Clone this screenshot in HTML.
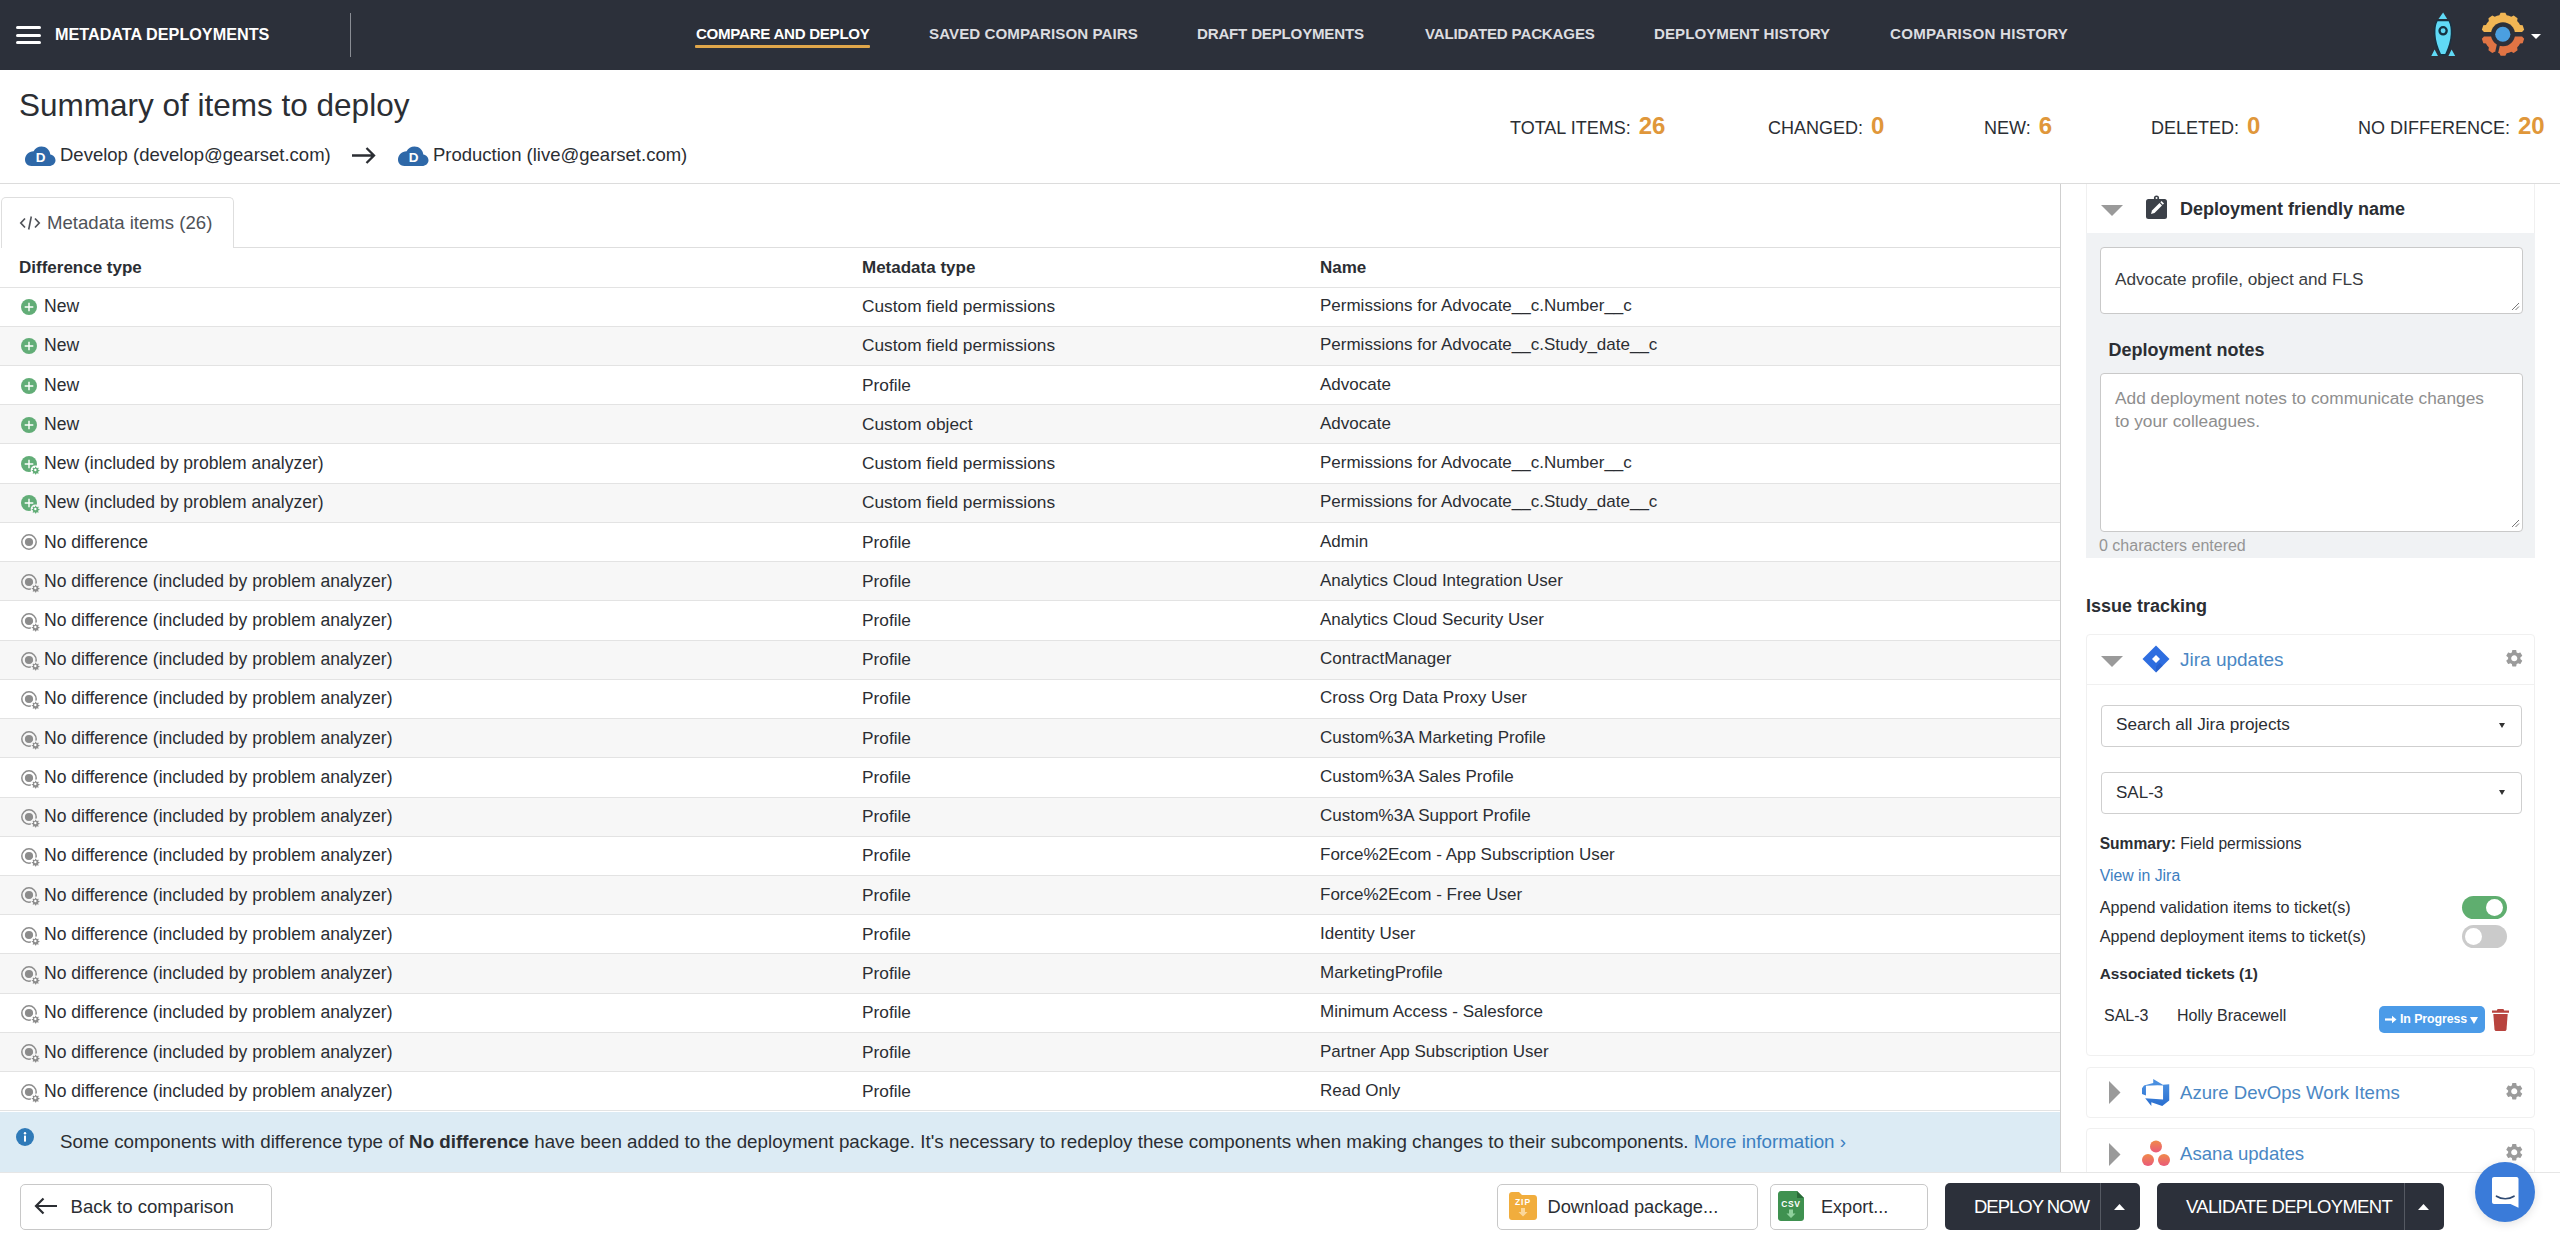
<!DOCTYPE html>
<html><head><meta charset="utf-8">
<style>
*{box-sizing:border-box;margin:0;padding:0}
html,body{width:2560px;height:1234px;overflow:hidden;background:#fff;font-family:"Liberation Sans",sans-serif;color:#2b2e33}
.abs{position:absolute}
.nw{white-space:nowrap}
/* nav */
#nav{position:absolute;left:0;top:0;width:2560px;height:70px;background:#2c303a}
.hb{position:absolute;left:16px;width:25px;height:3px;border-radius:2px;background:#fff}
.navi{position:absolute;top:25px;font-size:15.1px;font-weight:700;color:#dcdde0;white-space:nowrap;line-height:18px}
/* header */
.stat{position:absolute;top:114.5px;font-size:18px;color:#2b2e33;white-space:nowrap;line-height:22px}
.stat b{color:#e0973a;font-size:24px;margin-left:8px;position:relative;top:0.5px}
/* table */
.row{position:absolute;left:0;width:2060px;height:39.23px;border-top:1px solid #e3e3e3}
.row.alt{background:#f7f7f7}
.cell{position:absolute;top:-0.4px;line-height:38px;font-size:17.3px;white-space:nowrap;color:#2b2e33}
.ic{position:absolute;left:21px;top:11.5px;width:16px;height:16px}
</style></head><body>

<div id="nav">
  <div class="hb" style="top:26px"></div>
  <div class="hb" style="top:34px"></div>
  <div class="hb" style="top:41px"></div>
  <div class="abs nw" style="left:55px;top:24px;font-size:16.2px;font-weight:700;color:#fff;line-height:20px">METADATA DEPLOYMENTS</div>
  <div class="abs" style="left:350px;top:13px;width:1px;height:44px;background:#8a8d94"></div>
  <div class="navi" style="left:696px;color:#fff;letter-spacing:-.28px">COMPARE AND DEPLOY</div>
  <div class="abs" style="left:695px;top:45px;width:175px;height:3px;background:#e0a64a;border-radius:1px"></div>
  <div class="navi" style="left:929px;letter-spacing:.08px">SAVED COMPARISON PAIRS</div>
  <div class="navi" style="left:1197px;letter-spacing:-.2px">DRAFT DEPLOYMENTS</div>
  <div class="navi" style="left:1425px;letter-spacing:-.17px">VALIDATED PACKAGES</div>
  <div class="navi" style="left:1654px;letter-spacing:.05px">DEPLOYMENT HISTORY</div>
  <div class="navi" style="left:1890px;letter-spacing:.27px">COMPARISON HISTORY</div>
  <svg class="abs" style="left:2431px;top:12px" width="25" height="45" viewBox="0 0 25 45"><path d="M7.5 6.9L12.1 0.6 16.2 6.9z" fill="#60daf6"/><path d="M0.3 43.9L3.6 37.4 7 43.9zM17.4 43.9L20.6 37.4 24.2 43.9z" fill="#60daf6"/><path d="M6 8.6H18.2C20 12 20.7 17 20.5 22 20.2 30 17.2 37.5 14.7 42.8H9.5C7 37.5 4 30 3.7 22 3.5 17 4.2 12 6 8.6z" fill="#60daf6" stroke="#163242" stroke-width="1.5"/><circle cx="12.1" cy="18.8" r="3.6" fill="none" stroke="#163242" stroke-width="2.3"/></svg>
  <svg class="abs" style="left:2481px;top:12px" width="44" height="45" viewBox="0 0 44 45"><defs><clipPath id="gtop"><rect x="0" y="0" width="44" height="20.1"/></clipPath><clipPath id="gbot"><rect x="0" y="24.5" width="44" height="21"/></clipPath></defs><path clip-path="url(#gtop)" fill="#f2b654" d="M18.34 3.20 L19.63 0.78 L24.37 0.78 L25.66 3.20 L26.84 3.46 L27.99 3.80 L29.13 4.21 L30.23 4.68 L32.70 3.49 L36.54 6.27 L36.16 8.99 L36.96 9.90 L37.69 10.85 L38.37 11.84 L38.99 12.88 L41.69 13.36 L43.15 17.87 L41.25 19.85 L41.36 21.05 L41.40 22.25 L41.36 23.45 L41.25 24.65 L43.15 26.63 L41.69 31.14 L38.99 31.62 L38.37 32.66 L37.69 33.65 L36.96 34.60 L36.16 35.51 L36.54 38.23 L32.70 41.01 L30.23 39.82 L29.13 40.29 L27.99 40.70 L26.84 41.04 L25.66 41.30 L24.37 43.72 L19.63 43.72 L18.34 41.30 L17.16 41.04 L16.01 40.70 L14.87 40.29 L13.77 39.82 L11.30 41.01 L7.46 38.23 L7.84 35.51 L7.04 34.60 L6.31 33.65 L5.63 32.66 L5.01 31.62 L2.31 31.14 L0.85 26.63 L2.75 24.65 L2.64 23.45 L2.60 22.25 L2.64 21.05 L2.75 19.85 L0.85 17.87 L2.31 13.36 L5.01 12.88 L5.63 11.84 L6.31 10.85 L7.04 9.90 L7.84 8.99 L7.46 6.27 L11.30 3.49 L13.77 4.68 L14.87 4.21 L16.01 3.80 L17.16 3.46Z"/><path clip-path="url(#gbot)" fill="#e07444" d="M18.34 3.20 L19.63 0.78 L24.37 0.78 L25.66 3.20 L26.84 3.46 L27.99 3.80 L29.13 4.21 L30.23 4.68 L32.70 3.49 L36.54 6.27 L36.16 8.99 L36.96 9.90 L37.69 10.85 L38.37 11.84 L38.99 12.88 L41.69 13.36 L43.15 17.87 L41.25 19.85 L41.36 21.05 L41.40 22.25 L41.36 23.45 L41.25 24.65 L43.15 26.63 L41.69 31.14 L38.99 31.62 L38.37 32.66 L37.69 33.65 L36.96 34.60 L36.16 35.51 L36.54 38.23 L32.70 41.01 L30.23 39.82 L29.13 40.29 L27.99 40.70 L26.84 41.04 L25.66 41.30 L24.37 43.72 L19.63 43.72 L18.34 41.30 L17.16 41.04 L16.01 40.70 L14.87 40.29 L13.77 39.82 L11.30 41.01 L7.46 38.23 L7.84 35.51 L7.04 34.60 L6.31 33.65 L5.63 32.66 L5.01 31.62 L2.31 31.14 L0.85 26.63 L2.75 24.65 L2.64 23.45 L2.60 22.25 L2.64 21.05 L2.75 19.85 L0.85 17.87 L2.31 13.36 L5.01 12.88 L5.63 11.84 L6.31 10.85 L7.04 9.90 L7.84 8.99 L7.46 6.27 L11.30 3.49 L13.77 4.68 L14.87 4.21 L16.01 3.80 L17.16 3.46Z"/><circle cx="22" cy="22.25" r="12" fill="#2c303a"/><path d="M17.7 31.5L14.6 45" stroke="#2c303a" stroke-width="3.2"/><circle cx="21.8" cy="22.25" r="7.6" fill="#4b9fe0"/></svg>
  <svg class="abs" style="left:2531px;top:34px" width="10" height="5" viewBox="0 0 10 5"><path d="M0 0h10L5 5z" fill="#fff"/></svg>
</div>

<!-- header -->
<div class="abs nw" style="left:19px;top:86px;font-size:31.5px;line-height:38px;color:#2b2e33">Summary of items to deploy</div>
<div class="abs nw" style="left:60px;top:144px;font-size:18.5px;line-height:22px;color:#2b2e33">Develop (develop@gearset.com)</div>
<div class="abs nw" style="left:433px;top:144px;font-size:18.5px;line-height:22px;color:#2b2e33">Production (live@gearset.com)</div>
<svg class="abs" style="left:25px;top:145px" width="31" height="21" viewBox="0 0 31 21"><path transform="translate(30.5 0) scale(-1 1)" d="M6.5 21C2.9 21 0 18.5 0 15.2c0-2.9 2.2-5.3 5.2-5.8C5.6 4.9 9.4 1.5 14 1.5c3.4 0 6.4 1.9 7.9 4.8 4.9.1 8.6 3.9 8.6 8.5 0 3.5-2.8 6.2-6.3 6.2z" fill="#2e68a8"/><text x="15.5" y="16.8" font-family="Liberation Sans" font-weight="700" font-size="13.5" fill="#fff" text-anchor="middle">D</text></svg>
<svg class="abs" style="left:352px;top:147px" width="24" height="17" viewBox="0 0 24 17"><path d="M0 8.5h22M14.5 1l7.5 7.5-7.5 7.5" fill="none" stroke="#2b2e33" stroke-width="2.3"/></svg>
<svg class="abs" style="left:398px;top:145px" width="31" height="21" viewBox="0 0 31 21"><path transform="translate(30.5 0) scale(-1 1)" d="M6.5 21C2.9 21 0 18.5 0 15.2c0-2.9 2.2-5.3 5.2-5.8C5.6 4.9 9.4 1.5 14 1.5c3.4 0 6.4 1.9 7.9 4.8 4.9.1 8.6 3.9 8.6 8.5 0 3.5-2.8 6.2-6.3 6.2z" fill="#2e68a8"/><text x="15.5" y="16.8" font-family="Liberation Sans" font-weight="700" font-size="13.5" fill="#fff" text-anchor="middle">D</text></svg>
<div class="stat" style="left:1510px">TOTAL ITEMS:<b>26</b></div>
<div class="stat" style="left:1768px">CHANGED:<b>0</b></div>
<div class="stat" style="left:1984px">NEW:<b>6</b></div>
<div class="stat" style="left:2151px">DELETED:<b>0</b></div>
<div class="stat" style="left:2358px">NO DIFFERENCE:<b>20</b></div>
<div class="abs" style="left:0;top:183px;width:2560px;height:1px;background:#dcdcdc"></div>

<!-- main -->
<svg width="0" height="0" style="position:absolute">
 <defs>
  <g id="gearG" transform="translate(14.3 14) scale(.85) translate(-14.5 -14.5)"><path fill="#62ad77" d="M14.5 10.6l.9 0 .3 1.3 1 .5 1.1-.7.7.7-.7 1.1.4 1 1.3.3v1l-1.3.3-.4 1 .7 1.1-.7.7-1.1-.7-1 .4-.3 1.3h-1l-.3-1.3-1-.4-1.1.7-.7-.7.7-1.1-.4-1-1.3-.3v-1l1.3-.3.4-1-.7-1.1.7-.7 1.1.7 1-.5.3-1.3z"/><circle cx="14.5" cy="14.5" r="1.4" fill="#fff"/></g>
  <g id="gearN" transform="translate(14.3 14) scale(.85) translate(-14.5 -14.5)"><path fill="#8c8c8c" d="M14.5 10.6l.9 0 .3 1.3 1 .5 1.1-.7.7.7-.7 1.1.4 1 1.3.3v1l-1.3.3-.4 1 .7 1.1-.7.7-1.1-.7-1 .4-.3 1.3h-1l-.3-1.3-1-.4-1.1.7-.7-.7.7-1.1-.4-1-1.3-.3v-1l1.3-.3.4-1-.7-1.1.7-.7 1.1.7 1-.5.3-1.3z"/><circle cx="14.5" cy="14.5" r="1.4" fill="#fff"/></g>
  <g id="cog"><path fill="#9b9b9b" d="M19.14 12.94c.04-.3.06-.61.06-.94 0-.32-.02-.64-.07-.94l2.03-1.58c.18-.14.23-.41.12-.61l-1.92-3.32c-.12-.22-.37-.29-.59-.22l-2.39.96c-.5-.38-1.03-.7-1.62-.94l-.36-2.54c-.04-.24-.24-.41-.48-.41h-3.84c-.24 0-.43.17-.47.41l-.36 2.54c-.59.24-1.13.57-1.62.94l-2.39-.96c-.22-.08-.47 0-.59.22L2.74 8.87c-.12.21-.08.47.12.61l2.03 1.58c-.05.3-.09.63-.09.94s.02.64.07.94l-2.03 1.58c-.18.14-.23.41-.12.61l1.92 3.32c.12.22.37.29.59.22l2.39-.96c.5.38 1.03.7 1.62.94l.36 2.54c.05.24.24.41.48.41h3.84c.24 0 .44-.17.47-.41l.36-2.54c.59-.24 1.13-.56 1.62-.94l2.39.96c.22.08.47 0 .59-.22l1.92-3.32c.12-.22.07-.47-.12-.61l-2.01-1.58zM12 15.6c-1.98 0-3.6-1.62-3.6-3.6s1.62-3.6 3.6-3.6 3.6 1.62 3.6 3.6-1.62 3.6-3.6 3.6z"/></g>
 </defs>
</svg>
<div class="abs" style="left:0.5px;top:197px;width:233.5px;height:51px;border:1px solid #dedede;border-bottom:none;border-radius:5px 5px 0 0;background:#fff"></div>
<div class="abs" style="left:233px;top:247px;width:1827px;height:1px;background:#dedede"></div>
<div class="abs nw" style="left:19px;top:211.5px;font-size:18.6px;line-height:22px;color:#4f5258">
 <svg width="22" height="16" viewBox="0 0 22 16" style="vertical-align:-2px;margin-right:6px"><path d="M6 3.5L1.8 8 6 12.5M16 3.5L20.2 8 16 12.5" fill="none" stroke="#4f5258" stroke-width="1.7"/><path d="M12.3 1.5L9.7 14.5" stroke="#4f5258" stroke-width="1.6"/></svg>Metadata items (26)</div>
<div class="abs nw" style="left:19px;top:258px;font-size:17px;line-height:20px;font-weight:700;color:#2b2e33">Difference type</div>
<div class="abs nw" style="left:862px;top:258px;font-size:17px;line-height:20px;font-weight:700;color:#2b2e33">Metadata type</div>
<div class="abs nw" style="left:1320px;top:258px;font-size:17px;line-height:20px;font-weight:700;color:#2b2e33">Name</div>
<!--ROWS-->
<div class="row" style="top:286.5px"><svg class="ic" viewBox="0 0 16 16"><circle cx="8" cy="8" r="8" fill="#62ad77"/><path d="M8 3.7v8.6M3.7 8h8.6" stroke="#fff" stroke-width="1.4"/></svg><div class="cell" style="left:44px;font-size:17.55px">New</div><div class="cell" style="left:862px">Custom field permissions</div><div class="cell" style="left:1320px;font-size:17px">Permissions for Advocate__c.Number__c</div></div>
<div class="row alt" style="top:325.7px"><svg class="ic" viewBox="0 0 16 16"><circle cx="8" cy="8" r="8" fill="#62ad77"/><path d="M8 3.7v8.6M3.7 8h8.6" stroke="#fff" stroke-width="1.4"/></svg><div class="cell" style="left:44px;font-size:17.55px">New</div><div class="cell" style="left:862px">Custom field permissions</div><div class="cell" style="left:1320px;font-size:17px">Permissions for Advocate__c.Study_date__c</div></div>
<div class="row" style="top:365.0px"><svg class="ic" viewBox="0 0 16 16"><circle cx="8" cy="8" r="8" fill="#62ad77"/><path d="M8 3.7v8.6M3.7 8h8.6" stroke="#fff" stroke-width="1.4"/></svg><div class="cell" style="left:44px;font-size:17.55px">New</div><div class="cell" style="left:862px">Profile</div><div class="cell" style="left:1320px;font-size:17px">Advocate</div></div>
<div class="row alt" style="top:404.2px"><svg class="ic" viewBox="0 0 16 16"><circle cx="8" cy="8" r="8" fill="#62ad77"/><path d="M8 3.7v8.6M3.7 8h8.6" stroke="#fff" stroke-width="1.4"/></svg><div class="cell" style="left:44px;font-size:17.55px">New</div><div class="cell" style="left:862px">Custom object</div><div class="cell" style="left:1320px;font-size:17px">Advocate</div></div>
<div class="row" style="top:443.4px"><svg class="ic" viewBox="0 0 20 20" style="width:20px;height:20px"><circle cx="8" cy="8" r="8" fill="#62ad77"/><path d="M8 3.7v8.6M3.7 8h8.6" stroke="#fff" stroke-width="1.4"/><circle cx="14.3" cy="14" r="4.6" fill="#fff"/><use href="#gearG"/></svg><div class="cell" style="left:44px;font-size:17.55px">New (included by problem analyzer)</div><div class="cell" style="left:862px">Custom field permissions</div><div class="cell" style="left:1320px;font-size:17px">Permissions for Advocate__c.Number__c</div></div>
<div class="row alt" style="top:482.6px"><svg class="ic" viewBox="0 0 20 20" style="width:20px;height:20px"><circle cx="8" cy="8" r="8" fill="#62ad77"/><path d="M8 3.7v8.6M3.7 8h8.6" stroke="#fff" stroke-width="1.4"/><circle cx="14.3" cy="14" r="4.6" fill="#f7f7f7"/><use href="#gearG"/></svg><div class="cell" style="left:44px;font-size:17.55px">New (included by problem analyzer)</div><div class="cell" style="left:862px">Custom field permissions</div><div class="cell" style="left:1320px;font-size:17px">Permissions for Advocate__c.Study_date__c</div></div>
<div class="row" style="top:521.9px"><svg class="ic" viewBox="0 0 16 16"><circle cx="8" cy="8" r="7.2" fill="none" stroke="#8c8c8c" stroke-width="1.5"/><circle cx="8" cy="8" r="4.1" fill="#8c8c8c"/></svg><div class="cell" style="left:44px;font-size:17.55px">No difference</div><div class="cell" style="left:862px">Profile</div><div class="cell" style="left:1320px;font-size:17px">Admin</div></div>
<div class="row alt" style="top:561.1px"><svg class="ic" viewBox="0 0 20 20" style="width:20px;height:20px"><circle cx="8" cy="8" r="7.2" fill="none" stroke="#8c8c8c" stroke-width="1.5"/><circle cx="8" cy="8" r="4.1" fill="#8c8c8c"/><circle cx="14.3" cy="14" r="4.6" fill="#f7f7f7"/><use href="#gearN"/></svg><div class="cell" style="left:44px;font-size:17.55px">No difference (included by problem analyzer)</div><div class="cell" style="left:862px">Profile</div><div class="cell" style="left:1320px;font-size:17px">Analytics Cloud Integration User</div></div>
<div class="row" style="top:600.3px"><svg class="ic" viewBox="0 0 20 20" style="width:20px;height:20px"><circle cx="8" cy="8" r="7.2" fill="none" stroke="#8c8c8c" stroke-width="1.5"/><circle cx="8" cy="8" r="4.1" fill="#8c8c8c"/><circle cx="14.3" cy="14" r="4.6" fill="#fff"/><use href="#gearN"/></svg><div class="cell" style="left:44px;font-size:17.55px">No difference (included by problem analyzer)</div><div class="cell" style="left:862px">Profile</div><div class="cell" style="left:1320px;font-size:17px">Analytics Cloud Security User</div></div>
<div class="row alt" style="top:639.6px"><svg class="ic" viewBox="0 0 20 20" style="width:20px;height:20px"><circle cx="8" cy="8" r="7.2" fill="none" stroke="#8c8c8c" stroke-width="1.5"/><circle cx="8" cy="8" r="4.1" fill="#8c8c8c"/><circle cx="14.3" cy="14" r="4.6" fill="#f7f7f7"/><use href="#gearN"/></svg><div class="cell" style="left:44px;font-size:17.55px">No difference (included by problem analyzer)</div><div class="cell" style="left:862px">Profile</div><div class="cell" style="left:1320px;font-size:17px">ContractManager</div></div>
<div class="row" style="top:678.8px"><svg class="ic" viewBox="0 0 20 20" style="width:20px;height:20px"><circle cx="8" cy="8" r="7.2" fill="none" stroke="#8c8c8c" stroke-width="1.5"/><circle cx="8" cy="8" r="4.1" fill="#8c8c8c"/><circle cx="14.3" cy="14" r="4.6" fill="#fff"/><use href="#gearN"/></svg><div class="cell" style="left:44px;font-size:17.55px">No difference (included by problem analyzer)</div><div class="cell" style="left:862px">Profile</div><div class="cell" style="left:1320px;font-size:17px">Cross Org Data Proxy User</div></div>
<div class="row alt" style="top:718.0px"><svg class="ic" viewBox="0 0 20 20" style="width:20px;height:20px"><circle cx="8" cy="8" r="7.2" fill="none" stroke="#8c8c8c" stroke-width="1.5"/><circle cx="8" cy="8" r="4.1" fill="#8c8c8c"/><circle cx="14.3" cy="14" r="4.6" fill="#f7f7f7"/><use href="#gearN"/></svg><div class="cell" style="left:44px;font-size:17.55px">No difference (included by problem analyzer)</div><div class="cell" style="left:862px">Profile</div><div class="cell" style="left:1320px;font-size:17px">Custom%3A Marketing Profile</div></div>
<div class="row" style="top:757.3px"><svg class="ic" viewBox="0 0 20 20" style="width:20px;height:20px"><circle cx="8" cy="8" r="7.2" fill="none" stroke="#8c8c8c" stroke-width="1.5"/><circle cx="8" cy="8" r="4.1" fill="#8c8c8c"/><circle cx="14.3" cy="14" r="4.6" fill="#fff"/><use href="#gearN"/></svg><div class="cell" style="left:44px;font-size:17.55px">No difference (included by problem analyzer)</div><div class="cell" style="left:862px">Profile</div><div class="cell" style="left:1320px;font-size:17px">Custom%3A Sales Profile</div></div>
<div class="row alt" style="top:796.5px"><svg class="ic" viewBox="0 0 20 20" style="width:20px;height:20px"><circle cx="8" cy="8" r="7.2" fill="none" stroke="#8c8c8c" stroke-width="1.5"/><circle cx="8" cy="8" r="4.1" fill="#8c8c8c"/><circle cx="14.3" cy="14" r="4.6" fill="#f7f7f7"/><use href="#gearN"/></svg><div class="cell" style="left:44px;font-size:17.55px">No difference (included by problem analyzer)</div><div class="cell" style="left:862px">Profile</div><div class="cell" style="left:1320px;font-size:17px">Custom%3A Support Profile</div></div>
<div class="row" style="top:835.7px"><svg class="ic" viewBox="0 0 20 20" style="width:20px;height:20px"><circle cx="8" cy="8" r="7.2" fill="none" stroke="#8c8c8c" stroke-width="1.5"/><circle cx="8" cy="8" r="4.1" fill="#8c8c8c"/><circle cx="14.3" cy="14" r="4.6" fill="#fff"/><use href="#gearN"/></svg><div class="cell" style="left:44px;font-size:17.55px">No difference (included by problem analyzer)</div><div class="cell" style="left:862px">Profile</div><div class="cell" style="left:1320px;font-size:17px">Force%2Ecom - App Subscription User</div></div>
<div class="row alt" style="top:874.9px"><svg class="ic" viewBox="0 0 20 20" style="width:20px;height:20px"><circle cx="8" cy="8" r="7.2" fill="none" stroke="#8c8c8c" stroke-width="1.5"/><circle cx="8" cy="8" r="4.1" fill="#8c8c8c"/><circle cx="14.3" cy="14" r="4.6" fill="#f7f7f7"/><use href="#gearN"/></svg><div class="cell" style="left:44px;font-size:17.55px">No difference (included by problem analyzer)</div><div class="cell" style="left:862px">Profile</div><div class="cell" style="left:1320px;font-size:17px">Force%2Ecom - Free User</div></div>
<div class="row" style="top:914.2px"><svg class="ic" viewBox="0 0 20 20" style="width:20px;height:20px"><circle cx="8" cy="8" r="7.2" fill="none" stroke="#8c8c8c" stroke-width="1.5"/><circle cx="8" cy="8" r="4.1" fill="#8c8c8c"/><circle cx="14.3" cy="14" r="4.6" fill="#fff"/><use href="#gearN"/></svg><div class="cell" style="left:44px;font-size:17.55px">No difference (included by problem analyzer)</div><div class="cell" style="left:862px">Profile</div><div class="cell" style="left:1320px;font-size:17px">Identity User</div></div>
<div class="row alt" style="top:953.4px"><svg class="ic" viewBox="0 0 20 20" style="width:20px;height:20px"><circle cx="8" cy="8" r="7.2" fill="none" stroke="#8c8c8c" stroke-width="1.5"/><circle cx="8" cy="8" r="4.1" fill="#8c8c8c"/><circle cx="14.3" cy="14" r="4.6" fill="#f7f7f7"/><use href="#gearN"/></svg><div class="cell" style="left:44px;font-size:17.55px">No difference (included by problem analyzer)</div><div class="cell" style="left:862px">Profile</div><div class="cell" style="left:1320px;font-size:17px">MarketingProfile</div></div>
<div class="row" style="top:992.6px"><svg class="ic" viewBox="0 0 20 20" style="width:20px;height:20px"><circle cx="8" cy="8" r="7.2" fill="none" stroke="#8c8c8c" stroke-width="1.5"/><circle cx="8" cy="8" r="4.1" fill="#8c8c8c"/><circle cx="14.3" cy="14" r="4.6" fill="#fff"/><use href="#gearN"/></svg><div class="cell" style="left:44px;font-size:17.55px">No difference (included by problem analyzer)</div><div class="cell" style="left:862px">Profile</div><div class="cell" style="left:1320px;font-size:17px">Minimum Access - Salesforce</div></div>
<div class="row alt" style="top:1031.9px"><svg class="ic" viewBox="0 0 20 20" style="width:20px;height:20px"><circle cx="8" cy="8" r="7.2" fill="none" stroke="#8c8c8c" stroke-width="1.5"/><circle cx="8" cy="8" r="4.1" fill="#8c8c8c"/><circle cx="14.3" cy="14" r="4.6" fill="#f7f7f7"/><use href="#gearN"/></svg><div class="cell" style="left:44px;font-size:17.55px">No difference (included by problem analyzer)</div><div class="cell" style="left:862px">Profile</div><div class="cell" style="left:1320px;font-size:17px">Partner App Subscription User</div></div>
<div class="row" style="top:1071.1px"><svg class="ic" viewBox="0 0 20 20" style="width:20px;height:20px"><circle cx="8" cy="8" r="7.2" fill="none" stroke="#8c8c8c" stroke-width="1.5"/><circle cx="8" cy="8" r="4.1" fill="#8c8c8c"/><circle cx="14.3" cy="14" r="4.6" fill="#fff"/><use href="#gearN"/></svg><div class="cell" style="left:44px;font-size:17.55px">No difference (included by problem analyzer)</div><div class="cell" style="left:862px">Profile</div><div class="cell" style="left:1320px;font-size:17px">Read Only</div></div>
<!--/ROWS-->
<div class="abs" style="left:0;top:1110.3px;width:2060px;height:1px;background:#e3e3e3"></div>
<div class="abs" style="left:2060px;top:184px;width:1px;height:988px;background:#cfcfcf"></div>

<!-- banner -->
<div class="abs" style="left:0;top:1112px;width:2060px;height:60.5px;background:#dcebf4"></div>
<svg class="abs" style="left:16px;top:1128px" width="18" height="18" viewBox="0 0 18 18"><circle cx="9" cy="9" r="9" fill="#2f7ab8"/><circle cx="9" cy="5.2" r="1.2" fill="#fff"/><rect x="8" y="7.6" width="2" height="6" fill="#fff"/></svg>
<div class="abs nw" style="left:60px;top:1131px;font-size:18.78px;line-height:22px;color:#2b2e33">Some components with difference type of <b>No difference</b> have been added to the deployment package. It's necessary to redeploy these components when making changes to their subcomponents. <span style="color:#3b7fc0">More information ›</span></div>

<!-- sidebar -->
<div class="abs" style="left:2086px;top:184px;width:449px;height:49px;background:#fff;border:1px solid #f0f0f0;border-top:none;border-bottom:none"></div>
<svg class="abs" style="left:2100px;top:204px" width="24" height="12" viewBox="0 0 24 12"><path d="M1 1h22L12 12z" fill="#9a9a9a"/></svg>
<svg class="abs" style="left:2145px;top:195px" width="23" height="24" viewBox="0 0 23 24"><rect x="1" y="4" width="21" height="20" rx="2.5" fill="#3b4048"/><circle cx="11.5" cy="3" r="2.6" fill="#3b4048"/><circle cx="11.5" cy="3" r="1" fill="#fff"/><path d="M6 19l1-3.5 7.5-7.5 2.5 2.5-7.5 7.5z" fill="#fff"/><path d="M15.3 7.2l1.2-1.2 2.5 2.5-1.2 1.2z" fill="#fff"/></svg>
<div class="abs nw" style="left:2180px;top:198px;font-size:18px;line-height:22px;font-weight:700;color:#2b2e33">Deployment friendly name</div>
<div class="abs" style="left:2086px;top:233px;width:449px;height:325px;background:#f0f2f4"></div>
<div class="abs" style="left:2099.5px;top:247px;width:423.5px;height:67px;background:#fff;border:1px solid #c9c9c9;border-radius:4px"></div>
<div class="abs nw" style="left:2115px;top:268px;font-size:17.2px;line-height:22px;color:#3a3d42">Advocate profile, object and FLS</div>
<div class="abs nw" style="left:2108.5px;top:339px;font-size:18px;line-height:22px;font-weight:700;color:#2b2e33">Deployment notes</div>
<div class="abs" style="left:2099.5px;top:372.5px;width:423.5px;height:159px;background:#fff;border:1px solid #c9c9c9;border-radius:4px"></div>
<div class="abs" style="left:2115px;top:387px;font-size:17.3px;line-height:22.7px;color:#8e8e8e;width:390px">Add deployment notes to communicate changes<br>to your colleagues.</div>
<svg class="abs" style="left:2511px;top:302px" width="9" height="9" viewBox="0 0 9 9"><path d="M1 8L8 1M4.5 8L8 4.5" stroke="#777" stroke-width="1"/></svg>
<svg class="abs" style="left:2511px;top:519px" width="9" height="9" viewBox="0 0 9 9"><path d="M1 8L8 1M4.5 8L8 4.5" stroke="#777" stroke-width="1"/></svg>
<div class="abs nw" style="left:2099px;top:536px;font-size:16px;line-height:20px;color:#959595">0 characters entered</div>

<div class="abs nw" style="left:2086px;top:595px;font-size:18px;line-height:22px;font-weight:700;color:#2b2e33">Issue tracking</div>
<!-- jira card -->
<div class="abs" style="left:2086px;top:633.5px;width:449px;height:422px;border:1px solid #f0f0f0;border-radius:4px;background:#fff"></div>
<div class="abs" style="left:2087px;top:684px;width:447.5px;height:1px;background:#f0f0f0"></div>
<svg class="abs" style="left:2100px;top:655px" width="24" height="12" viewBox="0 0 24 12"><path d="M1 1h22L12 12z" fill="#9a9a9a"/></svg>
<svg class="abs" style="left:2142px;top:645px" width="28" height="28" viewBox="0 0 28 28"><path d="M14 0.5L27.5 14 14 27.5 0.5 14z" fill="#2e6ee0"/><path d="M14 10l4 4-4 4-4-4z" fill="#fff"/><path d="M14 27.5l6.75-6.75-3-3L14 21.5z" fill="#2458c0" opacity=".6"/></svg>
<div class="abs nw" style="left:2180px;top:649px;font-size:19px;line-height:22px;color:#4a87c4">Jira updates</div>
<svg class="abs" style="left:2503.5px;top:647.5px" width="20.5" height="20.5" viewBox="0 0 24 24"><use href="#cog"/></svg>
<div class="abs" style="left:2100.5px;top:704.5px;width:421.5px;height:42px;border:1px solid #cfcfcf;border-radius:4px;background:#fff"></div>
<div class="abs nw" style="left:2116px;top:713px;font-size:17.2px;line-height:22px;color:#2b2e33">Search all Jira projects</div>
<svg class="abs" style="left:2499px;top:723px" width="6" height="5" viewBox="0 0 6 5"><path d="M0 0h6L3 5z" fill="#333"/></svg>
<div class="abs" style="left:2100.5px;top:772px;width:421.5px;height:42px;border:1px solid #cfcfcf;border-radius:4px;background:#fff"></div>
<div class="abs nw" style="left:2116px;top:781.5px;font-size:17px;line-height:22px;color:#2b2e33">SAL-3</div>
<svg class="abs" style="left:2499px;top:790px" width="6" height="5" viewBox="0 0 6 5"><path d="M0 0h6L3 5z" fill="#333"/></svg>
<div class="abs nw" style="left:2099.7px;top:834px;font-size:15.6px;line-height:20px;color:#2b2e33"><b>Summary:</b> Field permissions</div>
<div class="abs nw" style="left:2099.7px;top:866px;font-size:15.8px;line-height:20px;color:#3d7ebf">View in Jira</div>
<div class="abs nw" style="left:2099.7px;top:897px;font-size:16.2px;line-height:20px;color:#2b2e33">Append validation items to ticket(s)</div>
<div class="abs" style="left:2462px;top:896px;width:45px;height:23px;border-radius:12px;background:#5fae6f"></div>
<div class="abs" style="left:2486px;top:899px;width:17px;height:17px;border-radius:50%;background:#fff"></div>
<div class="abs nw" style="left:2099.7px;top:926px;font-size:16.2px;line-height:20px;color:#2b2e33">Append deployment items to ticket(s)</div>
<div class="abs" style="left:2462px;top:925px;width:45px;height:22.5px;border-radius:12px;background:#cbcbcb"></div>
<div class="abs" style="left:2465px;top:927.5px;width:17px;height:17px;border-radius:50%;background:#fff"></div>
<div class="abs nw" style="left:2099.7px;top:964px;font-size:15.4px;line-height:20px;font-weight:700;color:#2b2e33">Associated tickets (1)</div>
<div class="abs nw" style="left:2104px;top:1006px;font-size:16px;line-height:20px;color:#2b2e33">SAL-3</div>
<div class="abs nw" style="left:2177px;top:1006px;font-size:16px;line-height:20px;color:#2b2e33">Holly Bracewell</div>
<div class="abs" style="left:2379px;top:1005.5px;width:106px;height:27.5px;border-radius:5px;background:#4b9be8"></div>
<svg class="abs" style="left:2385px;top:1015px" width="12" height="9" viewBox="0 0 12 9"><path d="M0 4.5h9" stroke="#fff" stroke-width="2.2"/><path d="M7 0.8l4.5 3.7L7 8.2z" fill="#fff"/></svg>
<div class="abs nw" style="left:2400px;top:1010px;font-size:12.4px;line-height:18px;font-weight:700;color:#fff;letter-spacing:-0.1px">In Progress</div>
<svg class="abs" style="left:2470px;top:1017px" width="8" height="7" viewBox="0 0 8 7"><path d="M0 0h8L4 7z" fill="#fff"/></svg>
<svg class="abs" style="left:2491px;top:1008px" width="19" height="23" viewBox="0 0 19 23"><path d="M6.5 1h6l.6 1.6H18v2.2H1V2.6h4.9z" fill="#b8433e"/><path d="M2.3 6h14.4l-1.2 15.5c-.1.9-.8 1.5-1.7 1.5H5.2c-.9 0-1.6-.6-1.7-1.5z" fill="#b8433e"/></svg>

<!-- azure card -->
<div class="abs" style="left:2086px;top:1066.5px;width:449px;height:51px;border:1px solid #f0f0f0;border-radius:4px;background:#fff"></div>
<svg class="abs" style="left:2109px;top:1081px" width="12" height="23" viewBox="0 0 12 23"><path d="M0 0l11.5 11.5L0 23z" fill="#9a9a9a"/></svg>
<svg class="abs" style="left:2142px;top:1078.5px" width="28" height="27" viewBox="0 0 18 18" preserveAspectRatio="none"><defs><linearGradient id="azg" x1="9" y1="17.5" x2="9" y2="0" gradientUnits="userSpaceOnUse"><stop offset="0" stop-color="#2a6fd0"/><stop offset=".8" stop-color="#4a8fe0"/></linearGradient></defs><path fill="url(#azg)" d="M17.5 3.5v10.87L13 18l-7-2.55v2.53L2.04 12.8l11.5.9V3.84zM13.67 4.05L7.22 0v2.66L1.3 4.4 0 6.1v3.84l2.54 1.12V4.47z"/></svg>
<div class="abs nw" style="left:2180px;top:1081.5px;font-size:18.6px;line-height:22px;color:#4a87c4">Azure DevOps Work Items</div>
<svg class="abs" style="left:2503.5px;top:1080.5px" width="20.5" height="20.5" viewBox="0 0 24 24"><use href="#cog"/></svg>
<!-- asana card -->
<div class="abs" style="left:2086px;top:1128px;width:449px;height:60px;border:1px solid #f0f0f0;border-radius:4px;background:#fff"></div>
<svg class="abs" style="left:2109px;top:1143px" width="12" height="23" viewBox="0 0 12 23"><path d="M0 0l11.5 11.5L0 23z" fill="#9a9a9a"/></svg>
<svg class="abs" style="left:2142px;top:1140px" width="28" height="27" viewBox="0 0 28 27"><defs><linearGradient id="asg" x1="0" y1="0" x2="0" y2="1"><stop offset="0" stop-color="#f08a4a"/><stop offset="1" stop-color="#ea5a7a"/></linearGradient></defs><circle cx="14" cy="6.5" r="6" fill="url(#asg)"/><circle cx="6" cy="20" r="6" fill="url(#asg)"/><circle cx="22" cy="20" r="6" fill="url(#asg)"/></svg>
<div class="abs nw" style="left:2180px;top:1143px;font-size:18.6px;line-height:22px;color:#4a87c4">Asana updates</div>
<svg class="abs" style="left:2503.5px;top:1142px" width="20.5" height="20.5" viewBox="0 0 24 24"><use href="#cog"/></svg>

<!-- footer -->
<div class="abs" style="left:0;top:1172px;width:2560px;height:62px;background:#fff;border-top:1px solid #e6e6e6"></div>
<div class="abs" style="left:19.5px;top:1183.5px;width:252px;height:46px;border:1px solid #c8c8c8;border-radius:5px;background:#fff"></div>
<svg class="abs" style="left:34px;top:1197px" width="24" height="18" viewBox="0 0 24 18"><path d="M23 9H2.5M9.5 1.5L2 9l7.5 7.5" fill="none" stroke="#2b2e33" stroke-width="2.2"/></svg>
<div class="abs nw" style="left:70.5px;top:1196px;font-size:18.6px;line-height:22px;color:#2b2e33">Back to comparison</div>

<div class="abs" style="left:1496.5px;top:1183.5px;width:261px;height:46px;border:1px solid #c8c8c8;border-radius:5px;background:#fff"></div>
<svg class="abs" style="left:1509px;top:1192px" width="28" height="28" viewBox="0 0 28 28"><path d="M0 3c0-1.7 1.3-3 3-3h7l3 3h12c1.7 0 3 1.3 3 3v19c0 1.7-1.3 3-3 3H3c-1.7 0-3-1.3-3-3z" fill="#f1ad3d"/><text x="14" y="13" font-family="Liberation Sans" font-weight="700" font-size="8.5" fill="#fff" text-anchor="middle" letter-spacing="1">ZIP</text><path d="M12 16h4v4h2.5L14 24.5 9.5 20H12z" fill="#fbd79a"/></svg>
<div class="abs nw" style="left:1547.5px;top:1196px;font-size:18.3px;line-height:22px;color:#2b2e33">Download package...</div>

<div class="abs" style="left:1769.5px;top:1183.5px;width:158.5px;height:46px;border:1px solid #c8c8c8;border-radius:5px;background:#fff"></div>
<svg class="abs" style="left:1778px;top:1191px" width="26" height="30" viewBox="0 0 26 30"><path d="M3 0h16l7 7v20c0 1.7-1.3 3-3 3H3c-1.7 0-3-1.3-3-3V3C0 1.3 1.3 0 3 0z" fill="#3f9150"/><path d="M19 0v7h7z" fill="#2a6a38"/><text x="13" y="16" font-family="Liberation Sans" font-weight="700" font-size="8.5" fill="#fff" text-anchor="middle" letter-spacing=".6">CSV</text><path d="M11 18.5h4v4h2.5L13 27l-4.5-4.5H11z" fill="#8fd19d"/></svg>
<div class="abs nw" style="left:1821px;top:1196px;font-size:18.1px;line-height:22px;color:#2b2e33">Export...</div>

<div class="abs" style="left:1945px;top:1183px;width:195px;height:46.5px;border-radius:5px;background:#2c303a"></div>
<div class="abs" style="left:2100px;top:1183px;width:1px;height:46.5px;background:#555962"></div>
<div class="abs nw" style="left:1974px;top:1196px;font-size:18.5px;line-height:22px;color:#fff;letter-spacing:-1px">DEPLOY NOW</div>
<svg class="abs" style="left:2114px;top:1204px" width="11" height="6" viewBox="0 0 11 6"><path d="M0 6L5.5 0 11 6z" fill="#fff"/></svg>
<div class="abs" style="left:2157px;top:1183px;width:287px;height:46.5px;border-radius:5px;background:#2c303a"></div>
<div class="abs" style="left:2404px;top:1183px;width:1px;height:46.5px;background:#555962"></div>
<div class="abs nw" style="left:2186px;top:1196px;font-size:18.5px;line-height:22px;color:#fff;letter-spacing:-0.7px">VALIDATE DEPLOYMENT</div>
<svg class="abs" style="left:2418px;top:1204px" width="11" height="6" viewBox="0 0 11 6"><path d="M0 6L5.5 0 11 6z" fill="#fff"/></svg>

<div class="abs" style="left:2475px;top:1162px;width:60px;height:60px;border-radius:50%;background:#3a7bd9;box-shadow:0 2px 10px rgba(0,0,0,.12)"></div>
<svg class="abs" style="left:2491.5px;top:1176.5px" width="27" height="31" viewBox="0 0 27 31"><path d="M2 0h22.5c1.1 0 2 .9 2 2v28.8l-8-3.8H2c-1.1 0-2-.9-2-2V2C0 .9.9 0 2 0z" fill="#fff"/><path d="M4.5 19.2c5.2 3.4 12.3 3.4 17.5 0" fill="none" stroke="#2f4a72" stroke-width="1.7" stroke-linecap="round"/></svg>

</body></html>
